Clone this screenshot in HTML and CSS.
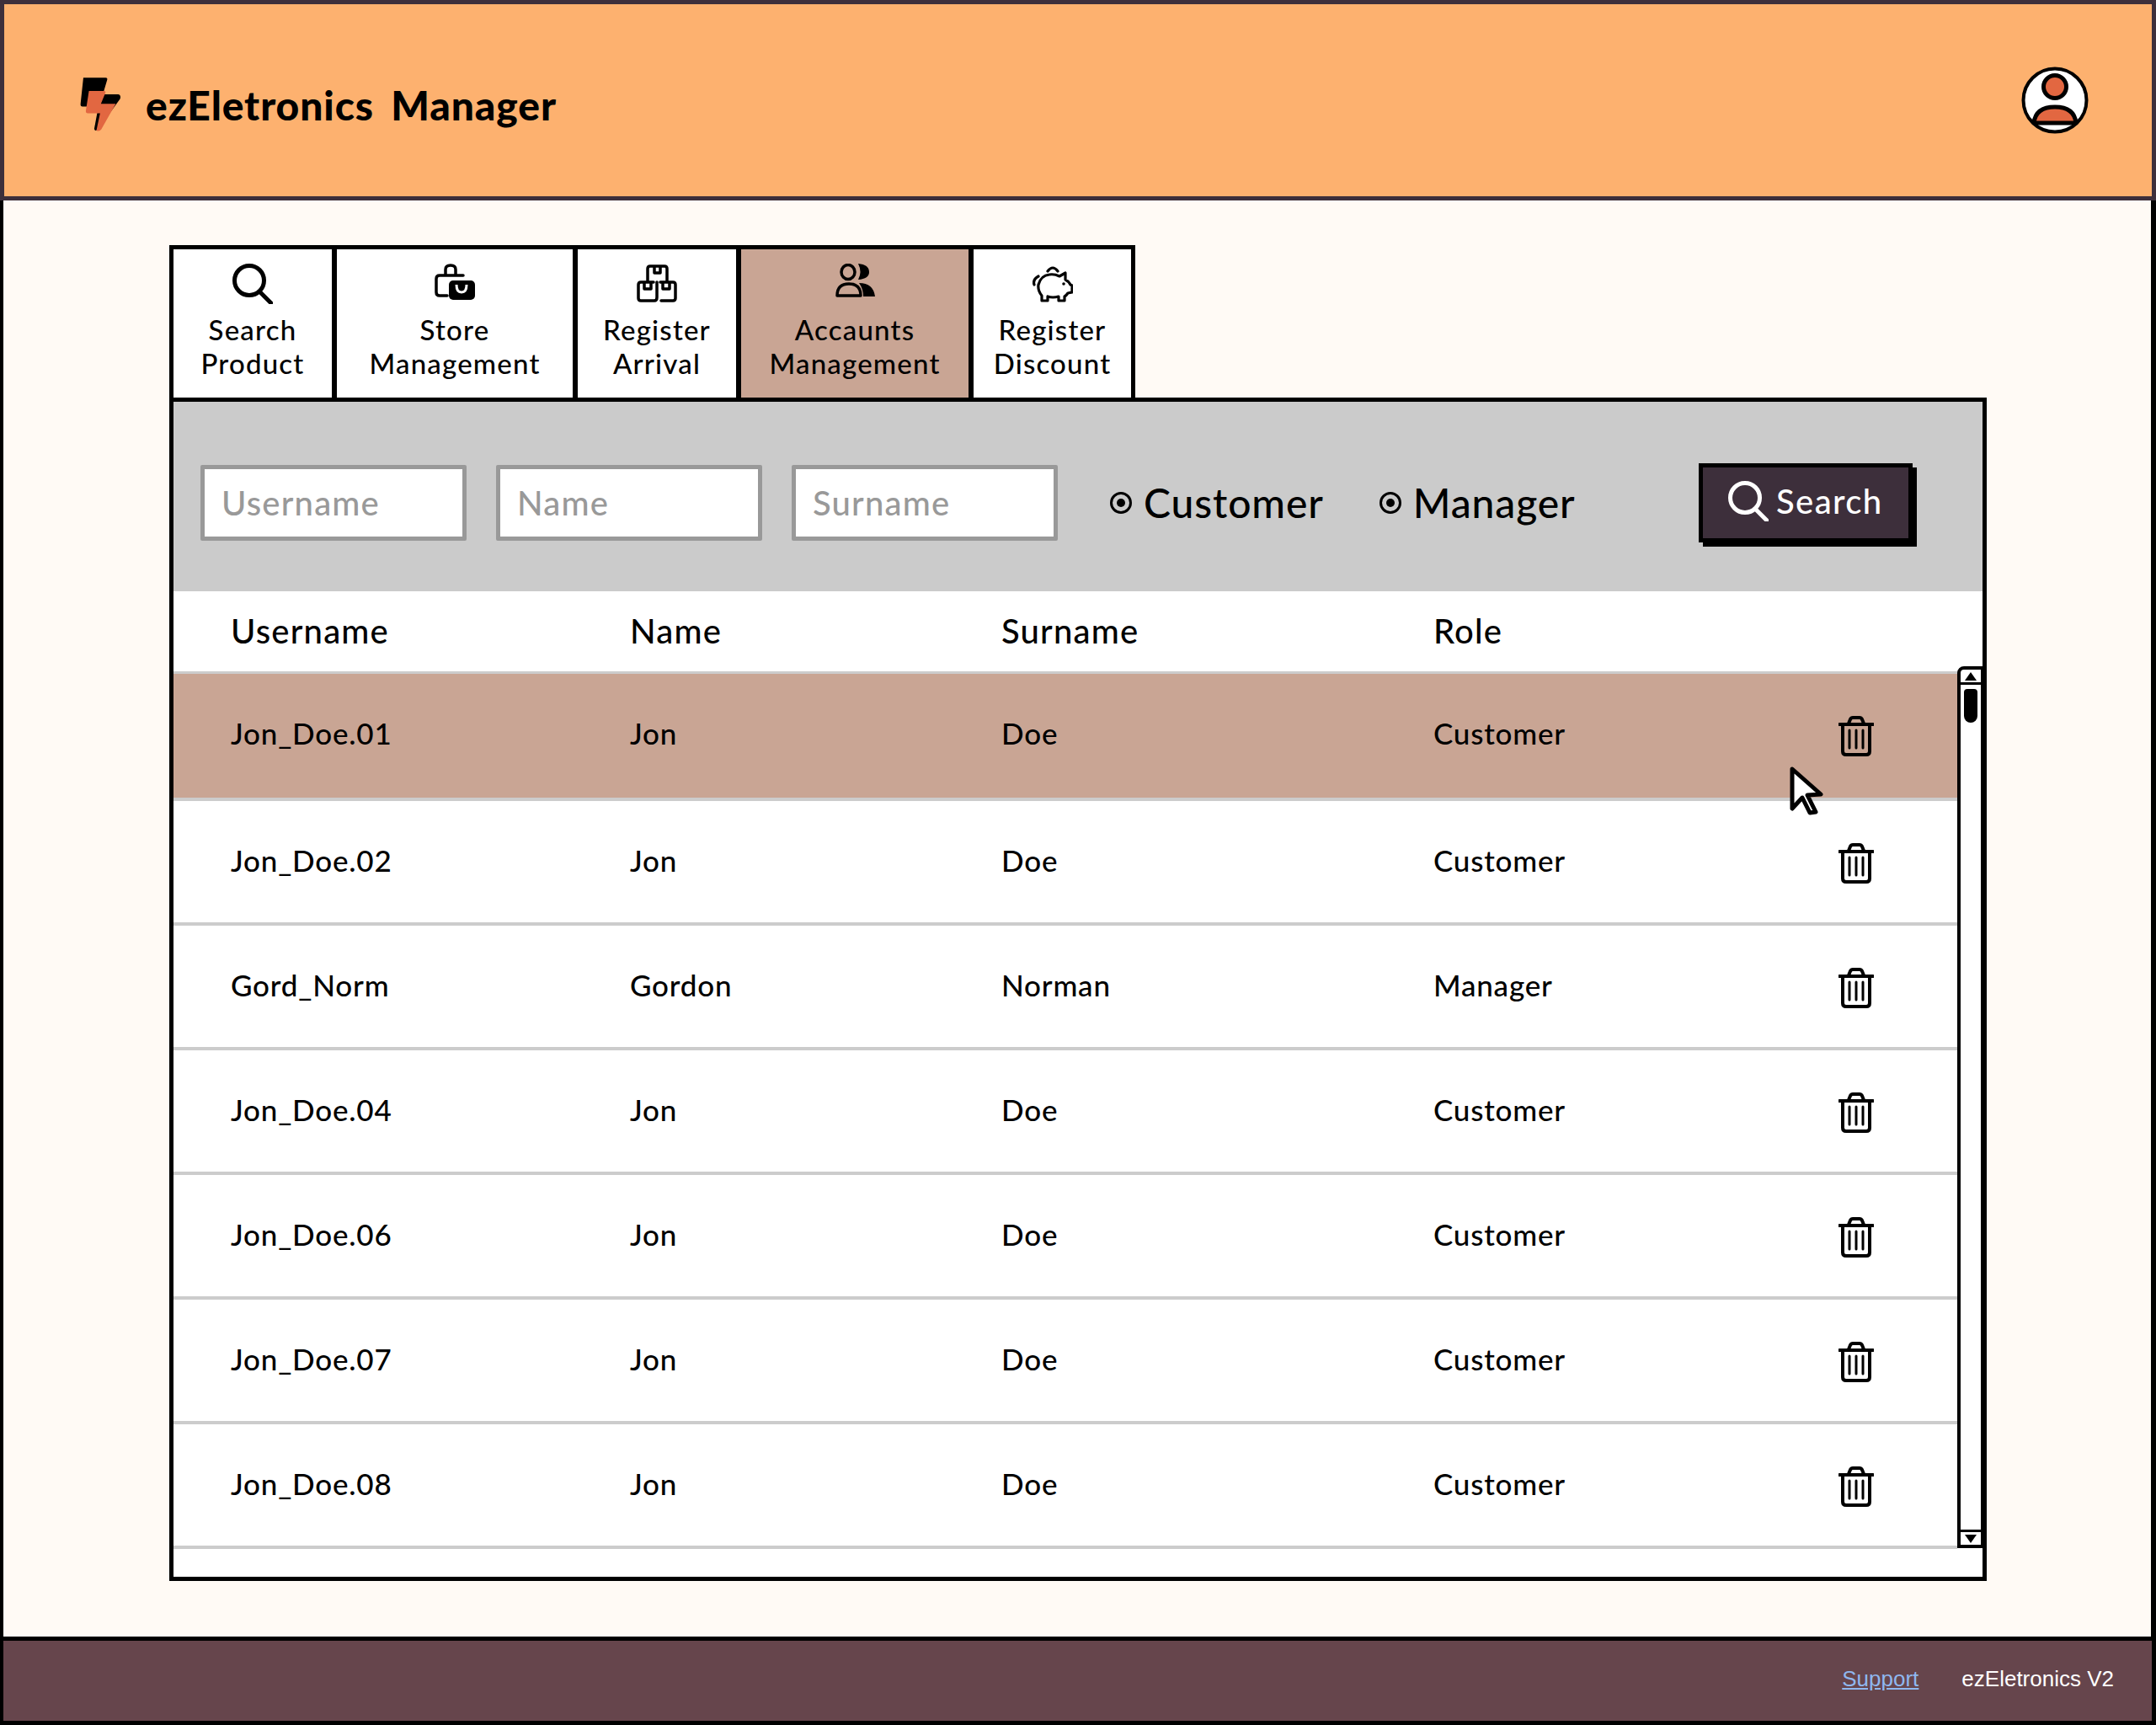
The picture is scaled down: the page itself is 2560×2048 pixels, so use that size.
FILE: index.html
```html
<!DOCTYPE html>
<html lang="en">

<head>
    <meta charset="UTF-8">
    <meta name="viewport" content="width=device-width, initial-scale=1.0">
    <title>ezEletronics Manager</title>
    <link rel="stylesheet" href="styles.css">
</head>

<body>
    <svg class="sprites" width="0" height="0">
        <symbol id="trash" viewBox="0 0 42 48">
            <path d="M1 10H41M12 9L14 4Q15 2 17 2H25Q27 2 28 4L30 9M5 10V42Q5 46 9 46H33Q37 46 37 42V10" fill="none" stroke="#000" stroke-width="4" stroke-linecap="round" stroke-linejoin="round"/>
            <path d="M13 17V38M21 17V38M29 17V38" fill="none" stroke="#000" stroke-width="3" stroke-linecap="round"/>
        </symbol>
        <symbol id="lens" viewBox="0 0 48 48">
            <circle cx="20" cy="20" r="17.5" fill="none" stroke="currentColor" stroke-width="5"/>
            <path d="M32 33L46 47" fill="none" stroke="currentColor" stroke-width="5" stroke-linecap="round"/>
        </symbol>
    </svg>

    <header class="top-bar">
        <div class="brand">
            <svg class="brand-logo" viewBox="100 90 160 205">
                <path d="M118 97H198Q206 97 203 106L188 156H243Q254 158 250 172L172 280Q160 292 157 280L172 200H115Q107 200 108 190Z" fill="#000"/>
                <path d="M138 144H192Q199 144 197 151L181 190H234L182 282Q172 292 165 285L178 224H134Q126 224 127 215Z" fill="#e26741"/>
            </svg>
            <span class="brand-name">ezEletronics Manager</span>
        </div>
        <svg class="profile" viewBox="0 0 80 80">
            <circle cx="40" cy="40" r="37.5" fill="#fff" stroke="#000" stroke-width="4"/>
            <circle cx="40" cy="24" r="13.5" fill="#e26741" stroke="#000" stroke-width="5"/>
            <path d="M15 67Q17 48 40 48Q63 48 65 67Z" fill="#e26741" stroke="#000" stroke-width="5" stroke-linejoin="round"/>
        </svg>
    </header>

    <main class="content">
        <nav class="tabs">
            <a class="tab tab-search">
                <svg class="tab-icon"><use href="#lens"/></svg>
                <span>Search<br>Product</span>
            </a>
            <a class="tab tab-store">
                <svg class="tab-icon" viewBox="0 0 48 48">
                    <path d="M15 38H6Q2 38 2 34V18Q2 14 6 14H34M13 14V7Q13 2 19 2Q25 2 25 7V14" fill="none" stroke="#000" stroke-width="3.5" stroke-linecap="round"/>
                    <rect x="17" y="20" width="31" height="23" rx="5" fill="#000"/>
                    <path d="M26 25Q26 34 32 34Q38 34 38 25" fill="none" stroke="#fff" stroke-width="3"/>
                </svg>
                <span>Store<br>Management</span>
            </a>
            <a class="tab tab-arrival">
                <svg class="tab-icon" viewBox="0 0 48 48">
                    <path d="M13 20V6Q13 3 16 3H33Q36 3 36 6V20M21 3V11H28V3M24 22V40Q24 44 21 44H5Q2 44 2 41V25Q2 22 5 22H20M28 22H43Q46 22 46 25V41Q46 44 43 44H29M9 22V30H17V22M31 22V30H39V22" fill="none" stroke="#000" stroke-width="3.5" stroke-linecap="round" stroke-linejoin="round"/>
                </svg>
                <span>Register<br>Arrival</span>
            </a>
            <a class="tab tab-accounts is-active">
                <svg class="tab-icon" viewBox="0 0 48 48">
                    <ellipse cx="16" cy="10" rx="8" ry="8.5" fill="none" stroke="#000" stroke-width="3.5"/>
                    <path d="M3 38Q3 24 17 24Q31 24 31 38Z" fill="none" stroke="#000" stroke-width="3.5" stroke-linejoin="round"/>
                    <path d="M28 0Q41 1 41 10Q41 18 28 19Q33 10 28 0Z" fill="#000"/>
                    <path d="M29 23Q46 23 48 39H34Q34 30 29 23Z" fill="#000"/>
                </svg>
                <span>Accaunts<br>Management</span>
            </a>
            <a class="tab tab-discount">
                <svg class="tab-icon" viewBox="0 0 48 48">
                    <path d="M7 25Q10 14 20 13Q26 12 32 15L39 11V19Q43 21 45 25L47 26V34L42 35Q40 38 38 39V44H31V39Q24 41 18 39V44H11V38Q6 32 7 25ZM7 15Q0 19 2 25M18 9Q24 1 30 9" fill="none" stroke="#000" stroke-width="3.2" stroke-linecap="round" stroke-linejoin="round"/>
                    <circle cx="37" cy="24" r="1.8" fill="#000"/>
                </svg>
                <span>Register<br>Discount</span>
            </a>
        </nav>

        <section class="panel">
            <form class="filters">
                <input class="filter-input" type="text" placeholder="Username">
                <input class="filter-input" type="text" placeholder="Name">
                <input class="filter-input" type="text" placeholder="Surname">
                <label class="role role-customer"><span class="radio"></span>Customer</label>
                <label class="role role-manager"><span class="radio"></span>Manager</label>
                <button class="search-btn" type="button">
                    <svg class="search-btn-icon"><use href="#lens"/></svg>
                    Search
                </button>
            </form>

            <div class="table-head">
                <span>Username</span>
                <span>Name</span>
                <span>Surname</span>
                <span>Role</span>
            </div>

            <div class="table-body">
                <div class="rows">
                    <div class="row is-selected">
                        <span>Jon_Doe.01</span><span>Jon</span><span>Doe</span><span>Customer</span><span></span>
                        <svg class="trash"><use href="#trash"/></svg>
                        <svg class="cursor" viewBox="0 0 40 58">
                            <path d="M3 3L37 33L21 34L31 54L24 55L15 37L3 50Z" fill="#fff" stroke="#000" stroke-width="5" stroke-linejoin="round"/>
                        </svg>
                    </div>
                    <div class="row">
                        <span>Jon_Doe.02</span><span>Jon</span><span>Doe</span><span>Customer</span><span></span>
                        <svg class="trash"><use href="#trash"/></svg>
                    </div>
                    <div class="row">
                        <span>Gord_Norm</span><span>Gordon</span><span>Norman</span><span>Manager</span><span></span>
                        <svg class="trash"><use href="#trash"/></svg>
                    </div>
                    <div class="row">
                        <span>Jon_Doe.04</span><span>Jon</span><span>Doe</span><span>Customer</span><span></span>
                        <svg class="trash"><use href="#trash"/></svg>
                    </div>
                    <div class="row">
                        <span>Jon_Doe.06</span><span>Jon</span><span>Doe</span><span>Customer</span><span></span>
                        <svg class="trash"><use href="#trash"/></svg>
                    </div>
                    <div class="row">
                        <span>Jon_Doe.07</span><span>Jon</span><span>Doe</span><span>Customer</span><span></span>
                        <svg class="trash"><use href="#trash"/></svg>
                    </div>
                    <div class="row">
                        <span>Jon_Doe.08</span><span>Jon</span><span>Doe</span><span>Customer</span><span></span>
                        <svg class="trash"><use href="#trash"/></svg>
                    </div>
                </div>
                <div class="scrollbar">
                    <div class="scroll-btn scroll-up"></div>
                    <div class="scroll-thumb"></div>
                    <div class="scroll-btn scroll-down"></div>
                </div>
            </div>
        </section>
    </main>

    <footer class="bottom-bar">
        <a class="support" href="#">Support</a>
        <span>ezEletronics V2</span>
    </footer>
</body>

</html>
```

FILE: styles.css
```css
* {
    box-sizing: border-box;
}

body {
    margin: 0;
    width: 2560px;
    height: 2048px;
    display: flex;
    flex-direction: column;
    font-family: "Lato", "Noto Sans", sans-serif;
    color: #000;
    background: #fffaf5;
}

.sprites {
    position: absolute;
}

/* header */
.top-bar {
    height: 238px;
    flex: none;
    display: flex;
    justify-content: space-between;
    align-items: center;
    padding: 0 75px 0 88px;
    background: #fdb16f;
    border: 5px solid #3d2f3b;
}

.brand {
    margin-top: 10px;
    display: flex;
    align-items: center;
    gap: 27px;
}

.brand-logo {
    width: 53px;
    height: 68px;
}

.brand-name {
    font-size: 48px;
    font-weight: 900;
    letter-spacing: 0.9px;
    word-spacing: 8px;
}

.profile {
    width: 80px;
    height: 80px;
}

/* middle */
.content {
    flex: 1;
    padding: 53px 0 0 197px;
    border-left: 4px solid #000;
    border-right: 6px solid #000;
}

.tabs {
    display: flex;
    margin-bottom: -5px;
}

.tab {
    height: 186px;
    margin-right: -4px;
    padding-top: 17px;
    display: flex;
    flex-direction: column;
    align-items: center;
    gap: 10px;
    font-size: 33px;
    font-weight: 500;
    letter-spacing: 1.2px;
    line-height: 40px;
    text-align: center;
    background: #fff;
    border: 5px solid #000;
}

.tab-search { width: 198px; }
.tab-store { width: 290px; }
.tab-arrival { width: 198px; }
.tab-accounts { width: 280px; }
.tab-discount { width: 197px; }

.tab.is-active {
    background: #c9a594;
}

.tab-icon {
    width: 48px;
    height: 48px;
    flex: none;
}

.panel {
    position: relative;
    width: 2158px;
    height: 1405px;
    background: #fff;
    border: 5px solid #000;
}

/* filter bar */
.filters {
    height: 225px;
    padding: 14px 83px 0 32px;
    display: flex;
    align-items: center;
    background: #cbcbcb;
}

.filter-input {
    width: 316px;
    height: 90px;
    margin-right: 35px;
    padding: 0 20px;
    font: 500 40px "Lato", "Noto Sans", sans-serif;
    letter-spacing: 1.2px;
    background: #fff;
    border: 5px solid #999;
    border-radius: 2px;
    outline: none;
}

.filter-input::placeholder {
    color: #999;
    opacity: 1;
}

.role {
    display: flex;
    align-items: center;
    gap: 14px;
    font-size: 48px;
    font-weight: 500;
    letter-spacing: 0.9px;
}

.role-customer {
    margin-left: 27px;
}

.role-manager {
    margin-left: 66px;
}

.radio {
    width: 26px;
    height: 26px;
    display: flex;
    justify-content: center;
    align-items: center;
    border: 3px solid #000;
    border-radius: 50%;
}

.radio::after {
    content: "";
    width: 10px;
    height: 10px;
    background: #000;
    border-radius: 50%;
}

.search-btn {
    width: 254px;
    height: 94px;
    margin-left: auto;
    padding: 0 0 3px 30px;
    display: flex;
    align-items: center;
    gap: 9px;
    font: 500 40px "Lato", "Noto Sans", sans-serif;
    letter-spacing: 1.4px;
    color: #fff;
    background: #3d2f3b;
    border: 5px solid #000;
    box-shadow: 5px 5px 0 #000;
}

.search-btn-icon {
    width: 48px;
    height: 48px;
    flex: none;
}

/* table */
.table-head,
.row {
    display: grid;
    grid-template-columns: 474px 441px 513px 480px 42px;
    padding-left: 68px;
}

.table-head {
    height: 98px;
    padding-bottom: 1px;
    align-items: center;
    font-size: 40px;
    font-weight: 500;
    letter-spacing: 1.2px;
    border-bottom: 3px solid #ccc;
}

.table-body {
    display: flex;
    align-items: flex-start;
}

.rows {
    width: 2118px;
}

.row {
    position: relative;
    height: 148px;
    padding-bottom: 5px;
    align-items: center;
    font-size: 35px;
    font-weight: 500;
    letter-spacing: 0.8px;
    border-bottom: 4px solid #ccc;
}

.row.is-selected {
    height: 151px;
    padding-bottom: 7px;
    background: #c9a594;
}

.trash {
    position: absolute;
    left: 1977px;
    top: 50px;
    width: 42px;
    height: 48px;
}

.cursor {
    position: absolute;
    left: 1919px;
    top: 110px;
    width: 40px;
    height: 58px;
}

.scrollbar {
    width: 30px;
    height: 1047px;
    margin-top: -9px;
    display: flex;
    flex-direction: column;
    align-items: center;
    background: #fff;
    border: 4px solid #000;
    border-right-width: 2px;
    border-radius: 8px 0 0 0;
}

.scroll-btn {
    width: 100%;
    height: 18px;
    flex: none;
    display: flex;
    justify-content: center;
    align-items: center;
}

.scroll-up {
    border-bottom: 3px solid #000;
}

.scroll-down {
    margin-top: auto;
    border-top: 3px solid #000;
}

.scroll-up::after,
.scroll-down::after {
    content: "";
    border-left: 7px solid transparent;
    border-right: 7px solid transparent;
}

.scroll-up::after {
    border-bottom: 10px solid #000;
}

.scroll-down::after {
    border-top: 10px solid #000;
}

.scroll-thumb {
    width: 16px;
    height: 40px;
    margin-top: 5px;
    background: #000;
    border-radius: 4px 4px 8px 8px;
}

/* footer */
.bottom-bar {
    height: 105px;
    flex: none;
    display: flex;
    justify-content: flex-end;
    align-items: center;
    gap: 51px;
    padding: 0 45px 5px 0;
    font-family: "Liberation Sans", sans-serif;
    font-size: 26px;
    color: #fff;
    background: #66454c;
    border: 5px solid #000;
    border-left-width: 4px;
}

.support {
    color: #8fb7ef;
}
```
